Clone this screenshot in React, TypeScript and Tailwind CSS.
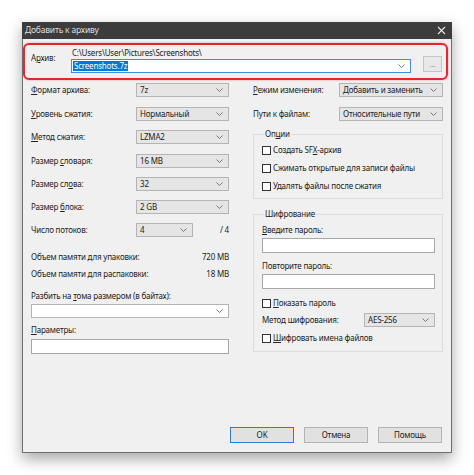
import React from 'react';

const Chevron = () => (
  <svg width="7" height="4" viewBox="0 0 7 4" className="shrink-0">
    <polyline points="0.5,0.5 3.5,3.5 6.5,0.5" fill="none" stroke="#6b6b6b" strokeWidth="0.9" />
  </svg>
);

const Combo: React.FC<{ value?: string; className?: string }> = ({ value, className }) => (
  <div
    className={`h-[14px] flex items-center justify-between pl-[3px] pr-[5px] bg-[#e5e5e5] border border-[#b4b4b4] ${className ?? ''}`}
  >
    <span className="leading-none whitespace-nowrap">{value}</span>
    <Chevron />
  </div>
);

const Check: React.FC<{ children: React.ReactNode; className?: string }> = ({ children, className }) => (
  <div className={`h-[12px] flex items-center gap-[2px] ${className ?? ''}`}>
    <div className="w-[9px] h-[9px] bg-white border border-[#333]" />
    <span className="leading-none">{children}</span>
  </div>
);

const U: React.FC<{ children: React.ReactNode }> = ({ children }) => <span className="underline">{children}</span>;

const leftRows: { label: React.ReactNode; value: string; mt: string }[] = [
  { label: <><U>Ф</U>ормат архива:</>, value: '7z', mt: 'mt-[3px]' },
  { label: <><U>У</U>ровень сжатия:</>, value: 'Нормальный', mt: 'mt-[10px]' },
  { label: <><U>М</U>етод сжатия:</>, value: 'LZMA2', mt: 'mt-[9px]' },
  { label: <>Размер <U>с</U>ловаря:</>, value: '16 MB', mt: 'mt-[10px]' },
  { label: <>Размер сл<U>о</U>ва:</>, value: '32', mt: 'mt-[9px]' },
  { label: <>Размер <U>б</U>лока:</>, value: '2 GB', mt: 'mt-[9px]' },
];

export default function App() {
  return (
    <div
      className="w-[474px] h-[475px] bg-white pt-[22px] pl-[22px] text-[8px] tracking-[-0.2px] text-[#222]"
      style={{ fontFamily: '"Noto Sans", "Open Sans", sans-serif' }}
    >
      <div className="w-[430px] h-[431px] flex flex-col bg-[#f0f0f0] border-x border-b border-[#6f6f6f] shadow-[0_6px_14px_rgba(0,0,0,0.35)]">
        {/* title bar */}
        <div className="h-[17px] shrink-0 bg-[#3c3c3c] flex items-center justify-between pl-[3px] pr-[6px] -mx-px">
          <span className="text-[#dedede] text-[8.5px] leading-none">Добавить к архиву</span>
          <svg width="9" height="9" viewBox="0 0 9 9">
            <path d="M1 1 L8 8 M8 1 L1 8" stroke="#e6e6e6" strokeWidth="1.1" />
          </svg>
        </div>

        {/* archive */}
        <div className="mt-[4px] w-[425px] h-[37px] border-2 border-[#e3262f] rounded-[6px] flex items-start pl-[6px] shadow-[0_0_2px_rgba(227,38,47,0.5)]">
          <span className="mt-[8px] w-[40px] leading-[10px]">
            А<U>р</U>хив:
          </span>
          <div className="flex flex-col">
            <span className="mt-[2px] leading-[12px] pl-[1px]">C:\Users\User\Pictures\Screenshots\</span>
            <div className="w-[340px] h-[14px] bg-white border border-[#3c8fd8] flex items-center justify-between pl-[1px] pr-[5px]">
              <span className="bg-[#0078d7] text-white leading-[10px] px-[1px]">Screenshots.7z</span>
              <Chevron />
            </div>
          </div>
          <div className="mt-[11px] ml-[12px] w-[19px] h-[16px] bg-[#e8e8e8] border border-[#c4c4c4] flex items-center justify-center text-[#8a8a8a] leading-none">
            ...
          </div>
        </div>

        {/* columns */}
        <div className="flex pl-[8px]">
          {/* left */}
          <div className="w-[198px] flex flex-col">
            {leftRows.map((r, i) => (
              <div key={i} className={`flex items-center justify-between ${r.mt}`}>
                <span className="leading-none">{r.label}</span>
                <Combo value={r.value} className="w-[93px]" />
              </div>
            ))}
            <div className="flex items-center mt-[9px]">
              <span className="leading-none w-[105px]">Число потоков:</span>
              <Combo value="4" className="w-[57px]" />
              <span className="ml-auto leading-none">/ 4</span>
            </div>
            <div className="flex justify-between mt-[14px] leading-[12px]">
              <span>Объем памяти для упаковки:</span>
              <span>720 MB</span>
            </div>
            <div className="flex justify-between mt-[5px] leading-[12px]">
              <span>Объем памяти для распаковки:</span>
              <span>18 MB</span>
            </div>
            <span className="mt-[10px] leading-[12px]">
              Разбить на <U>т</U>ома размером (в байтах):
            </span>
            <Combo className="mt-[2px] bg-white border-[#a8a8a8]" />
            <span className="mt-[6px] leading-[12px]">
              <U>П</U>араметры:
            </span>
            <div className="mt-[3px] h-[15px] bg-white border border-[#a8a8a8]" />
          </div>

          {/* right */}
          <div className="ml-[24px] w-[190px] flex flex-col">
            <div className="flex items-center justify-between mt-[3px]">
              <span className="leading-none">
                <U>Р</U>ежим изменения:
              </span>
              <Combo value="Добавить и заменить" className="w-[104px]" />
            </div>
            <div className="flex items-center justify-between mt-[10px]">
              <span className="leading-none">Пути к файлам:</span>
              <Combo value="Относительные пути" className="w-[104px]" />
            </div>

            <fieldset className="mt-[8px] border border-[#dcdcdc] pl-[8px] pr-[7px] pb-[6px] flex flex-col">
              <legend className="ml-[2px] px-[1px] leading-[10px]">
                Оп<U>ц</U>ии
              </legend>
              <Check className="mt-[5px]">
                Создать SF<U>X</U>-архив
              </Check>
              <Check className="mt-[6px]">Сжимать открытые для записи файлы</Check>
              <Check className="mt-[6px]">Удалять файлы после сжатия</Check>
            </fieldset>

            <fieldset className="mt-[10px] border border-[#dcdcdc] pl-[8px] pr-[7px] pb-[7px] flex flex-col">
              <legend className="ml-[2px] px-[1px] leading-[10px]">Шифрование</legend>
              <span className="mt-[5px] leading-[12px]">
                <U>В</U>ведите пароль:
              </span>
              <div className="mt-[2px] h-[15px] bg-white border border-[#a8a8a8]" />
              <span className="mt-[7px] leading-[12px]">Повторите пароль:</span>
              <div className="mt-[2px] h-[15px] bg-white border border-[#a8a8a8]" />
              <Check className="mt-[8px]">
                <U>П</U>оказать пароль
              </Check>
              <div className="flex items-center justify-between mt-[4px]">
                <span className="leading-none">Метод шифрования:</span>
                <Combo value="AES-256" className="w-[71px]" />
              </div>
              <Check className="mt-[5px]">
                <U>Ш</U>ифровать имена файлов
              </Check>
            </fieldset>
          </div>
        </div>

        {/* buttons */}
        <div className="mt-auto flex justify-end gap-[10px] pr-[9px] pb-[9px]">
          <button className="w-[64px] h-[16px] bg-[#e1e1e1] border border-[#2a7fd4] leading-none">OK</button>
          <button className="w-[64px] h-[16px] bg-[#e1e1e1] border border-[#b4b4b4] leading-none">Отмена</button>
          <button className="w-[64px] h-[16px] bg-[#e1e1e1] border border-[#b4b4b4] leading-none">Помощь</button>
        </div>
      </div>
    </div>
  );
}
